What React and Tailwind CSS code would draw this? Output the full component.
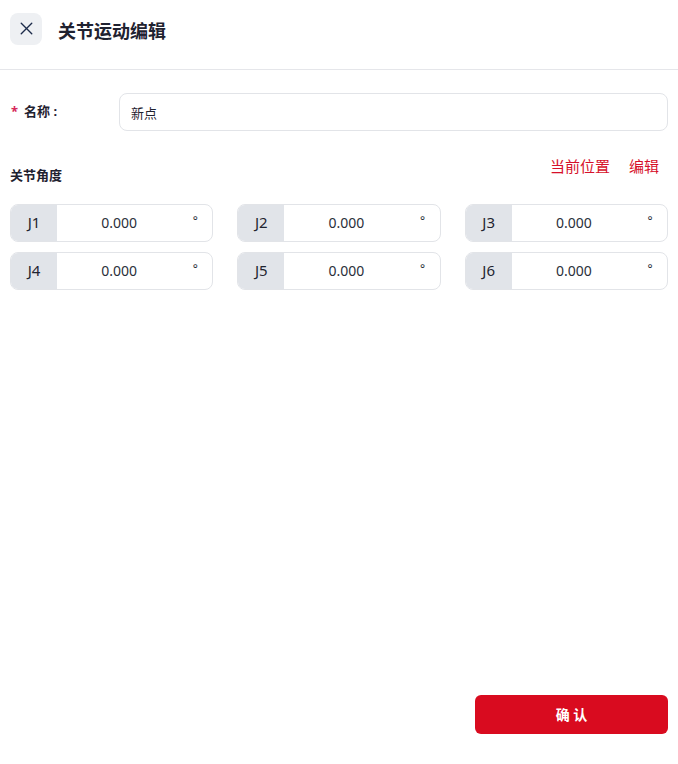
import { X } from 'lucide-react'

const joints = ['J1', 'J2', 'J3', 'J4', 'J5', 'J6']

function JointInput({ label }) {
  return (
    <div className="flex h-[38px] overflow-hidden rounded-lg border border-[#e2e4e8] bg-white">
      <div className="flex w-[46px] items-center justify-center bg-[#e1e4e9] text-[15px] text-[#1f2430]">
        {label}
      </div>
      <div className="flex flex-1 items-center justify-center pl-[3px] text-[14px] text-[#2a2f3a]">0.000</div>
      <div className="flex w-[34px] items-start justify-center pt-[7px] text-[12px] text-[#2a2f3a]">°</div>
    </div>
  )
}

export default function App() {
  return (
    <div
      className="flex h-[764px] flex-col bg-white"
      style={{ fontFamily: '"Noto Sans", "Noto Sans CJK SC", sans-serif' }}
    >
      <header className="flex h-[70px] items-center gap-4 border-b border-[#e5e6ea] px-[10px] pb-[12px]">
        <button className="flex h-8 w-8 items-center justify-center rounded-lg bg-[#eef0f3] text-[#1c2a4a]">
          <X size={21} strokeWidth={1.6} />
        </button>
        <h1 className="mt-[6px] text-[18px] font-bold text-[#1f2230]">关节运动编辑</h1>
      </header>

      <main className="flex flex-1 flex-col px-[10px]">
        <div className="mt-[23px] flex items-center">
          <label className="flex w-[109px] items-center pl-[1px] text-[13px] font-bold text-[#1f2230]">
            <span className="mr-[6px] text-[#d6285a]">*</span>名称 :
          </label>
          <input
            defaultValue="新点"
            className="h-[38px] flex-1 rounded-lg border border-[#e2e4e8] px-[11px] text-[13px] text-[#1f2230] outline-none"
          />
        </div>

        <div className="mt-[24px] flex items-start justify-between">
          <h2 className="mt-[11px] text-[13px] font-bold text-[#1f2230]">关节角度</h2>
          <div className="flex gap-[19px] pr-[9px] text-[15px] text-[#d6102a]">
            <button>当前位置</button>
            <button>编辑</button>
          </div>
        </div>

        <div className="mt-[18px] grid grid-cols-3 gap-x-[24px] gap-y-[10px]">
          {joints.map((j) => (
            <JointInput key={j} label={j} />
          ))}
        </div>

        <div className="mt-auto mb-[30px] flex justify-end">
          <button className="h-[39px] w-[193px] rounded-md bg-[#d90b1f] text-[14px] font-bold text-white">
            确 认
          </button>
        </div>
      </main>
    </div>
  )
}
